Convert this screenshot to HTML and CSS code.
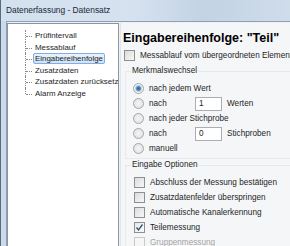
FILE: index.html
```html
<!DOCTYPE html>
<html lang="de">
<head>
    <meta charset="UTF-8">
    <title>Datenerfassung - Datensatz</title>
    <link rel="stylesheet" href="styles.css">
</head>
<body>
    <div class="window">
        <div class="titlebar">Datenerfassung - Datensatz</div>
        <div class="client">
            <div class="tree">
                <ul class="tree-list">
                    <li><span class="node">Prüfintervall</span></li>
                    <li><span class="node">Messablauf</span></li>
                    <li><span class="node selected">Eingabereihenfolge</span></li>
                    <li><span class="node">Zusatzdaten</span></li>
                    <li><span class="node">Zusatzdaten zurücksetzen</span></li>
                    <li class="last"><span class="node">Alarm Anzeige</span></li>
                </ul>
            </div>

            <div class="content">
                <h1 class="heading">Eingabereihenfolge: "Teil"</h1>
                <div class="row top-check">
                    <span class="check"></span>
                    <span>Messablauf vom übergeordneten Element empfangen</span>
                </div>

                <fieldset class="group first">
                    <legend>Merkmalswechsel</legend>
                    <div class="rows">
                        <div class="row"><span class="radio on"></span><span>nach jedem Wert</span></div>
                        <div class="row"><span class="radio"></span><span class="short">nach</span><span class="field">1</span><span class="unit">Werten</span></div>
                        <div class="row"><span class="radio"></span><span>nach jeder Stichprobe</span></div>
                        <div class="row"><span class="radio"></span><span class="short">nach</span><span class="field">0</span><span class="unit">Stichproben</span></div>
                        <div class="row"><span class="radio"></span><span>manuell</span></div>
                    </div>
                </fieldset>

                <fieldset class="group second">
                    <legend>Eingabe Optionen</legend>
                    <div class="rows">
                        <div class="row"><span class="check"></span><span>Abschluss der Messung bestätigen</span></div>
                        <div class="row"><span class="check"></span><span>Zusatzdatenfelder überspringen</span></div>
                        <div class="row"><span class="check"></span><span>Automatische Kanalerkennung</span></div>
                        <div class="row"><span class="check checked">
                            <svg width="9" height="9" viewBox="0 0 9 9"><path d="M1.5 4.5 L3.5 7 L7.5 1.5" fill="none" stroke="#3b4f6b" stroke-width="1.3"/></svg>
                        </span><span>Teilemessung</span></div>
                        <div class="row disabled"><span class="check"></span><span>Gruppenmessung</span></div>
                    </div>
                </fieldset>
            </div>
        </div>
    </div>
</body>
</html>
```

FILE: styles.css
```css
body {
    margin: 0;
    overflow: hidden;
    font-family: "Liberation Sans", Arial, sans-serif;
    font-size: 8.2px;
    color: #1e1e1e;
    background: #cbdaea;
}

.window {
    width: 290px;
    height: 246px;
    border-left: 1px solid #586c80;
    background: #cbdaea;
    box-sizing: border-box;
    overflow: hidden;
}

.titlebar {
    height: 21px;
    line-height: 20px;
    padding-left: 5px;
    font-size: 8.4px;
    color: #1b2836;
    background: linear-gradient(to right, #d3e0ee 0%, #d6e2ef 45%, #c3d3e4 70%, #cfdcea 100%);
}

.client {
    display: flex;
    height: 225px;
    margin-left: 5px;
    border-left: 1px solid #8ea0b3;
    border-top: 1px solid #8ea0b3;
    background: #eef2f7;
    padding-top: 1px;
}

.tree {
    width: 110px;
    flex-shrink: 0;
    background: #fff;
    border: 1px solid #8b95a1;
    border-bottom: none;
    overflow: hidden;
    font-size: 7.9px;
}

.tree-list {
    list-style: none;
    margin: 0;
    padding: 6px 0 0 17px;
}

.tree-list li {
    position: relative;
    height: 11.6px;
    line-height: 11.6px;
    border-left: 1px dotted #8a8a8a;
    padding-left: 7px;
}

.tree-list li::before {
    content: "";
    position: absolute;
    left: 0;
    top: 6px;
    width: 6px;
    border-top: 1px dotted #8a8a8a;
}

.tree-list li.last {
    border-left-color: transparent;
}

.tree-list li.last::after {
    content: "";
    position: absolute;
    left: -1px;
    top: 0;
    height: 6px;
    border-left: 1px dotted #8a8a8a;
}

.node {
    padding: 0 2px;
    white-space: nowrap;
}

.node.selected {
    border: 1px solid #84acdd;
    border-radius: 2px;
    background: linear-gradient(#eaf3fd, #cde2fb);
    padding: 0 1px;
}

.content {
    flex: 1;
    min-width: 0;
    padding-left: 2px;
    margin-left: 1px;
    background: #f5f6f8;
    border-left: 1px solid #e2e6eb;
    white-space: nowrap;
    overflow: hidden;
}

.heading {
    margin: 0;
    padding-top: 7px;
    height: 16px;
    line-height: 16px;
    font-size: 12.5px;
    font-weight: bold;
    color: #000;
}

.row {
    display: flex;
    align-items: center;
    height: 14px;
}

.group .row {
    height: 15px;
}

.top-check {
    margin-top: 2px;
    margin-left: 1px;
}

.check {
    width: 9px;
    height: 9px;
    flex-shrink: 0;
    margin-right: 5px;
    border: 1px solid #8e8f8f;
    background: linear-gradient(135deg, #dcdcdc, #f7f7f7);
    box-sizing: content-box;
    display: flex;
    align-items: center;
    justify-content: center;
}

.checked {
    background: linear-gradient(135deg, #e4e9f0, #f9fafc);
}

.disabled {
    color: #a3a3a3;
}

.disabled .check {
    border-color: #c9c9c9;
    background: #f6f6f6;
}

.group {
    margin: 0 0 0 2px;
    padding: 0 0 0 5px;
    border: 1px solid #e6eaee;
    border-right: none;
    min-width: 0;
}

.group.first {
    margin-top: 4px;
}

.group.second {
    margin-top: 1px;
}

.group legend {
    padding: 0 1px;
    height: 10px;
    line-height: 10px;
    color: #1e1e1e;
}

.rows {
    padding-top: 5px;
    padding-bottom: 2px;
}

.group .rows .row .check {
    margin-left: 3px;
}

.radio {
    width: 9px;
    height: 9px;
    flex-shrink: 0;
    margin: 0 5px 0 2px;
    border: 1px solid #a6a6a6;
    border-radius: 50%;
    background: radial-gradient(circle, #f6f6f6, #dedede);
    box-sizing: content-box;
}

.radio.on {
    background: radial-gradient(circle, #2e5a86 0, #5d8cb8 2px, #b9d0e6 3px, #eef3f8 4px);
}

.short {
    width: 46px;
}

.field {
    width: 22px;
    height: 12px;
    line-height: 12px;
    padding-left: 3px;
    border: 1px solid #abadb3;
    background: #fff;
}

.unit {
    margin-left: 5px;
}
```
